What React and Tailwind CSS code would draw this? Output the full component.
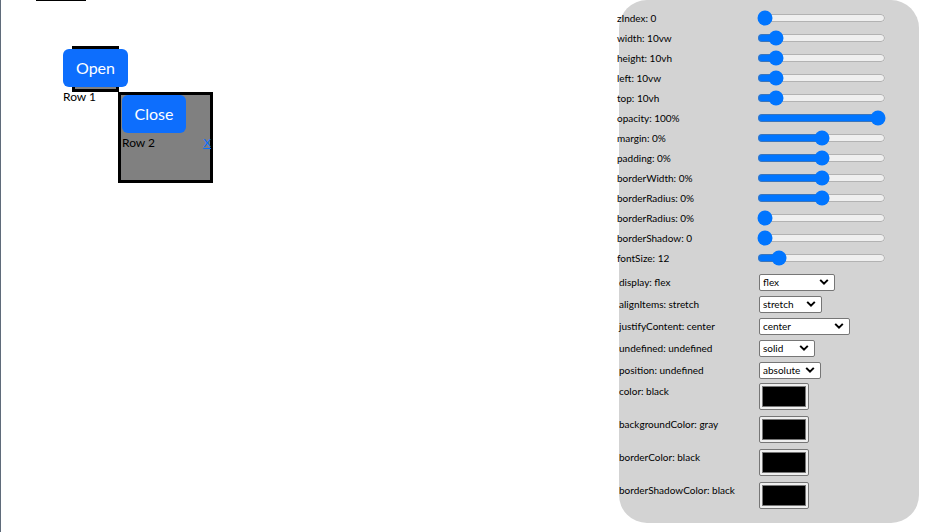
import React from "react";

const sliders = [
  { label: "zIndex: 0", min: 0, max: 100, value: 0 },
  { label: "width: 10vw", min: 0, max: 100, value: 10 },
  { label: "height: 10vh", min: 0, max: 100, value: 10 },
  { label: "left: 10vw", min: 0, max: 100, value: 10 },
  { label: "top: 10vh", min: 0, max: 100, value: 10 },
  { label: "opacity: 100%", min: 0, max: 100, value: 100 },
  { label: "margin: 0%", min: -100, max: 100, value: 0 },
  { label: "padding: 0%", min: -100, max: 100, value: 0 },
  { label: "borderWidth: 0%", min: -100, max: 100, value: 0 },
  { label: "borderRadius: 0%", min: -100, max: 100, value: 0 },
  { label: "borderRadius: 0%", min: 0, max: 100, value: 0 },
  { label: "borderShadow: 0", min: 0, max: 100, value: 0 },
  { label: "fontSize: 12", min: 0, max: 95, value: 12 },
];

const selects = [
  { label: "display: flex", value: "flex", options: ["flex", "block", "inline", "grid"], w: "w-[76px]" },
  { label: "alignItems: stretch", value: "stretch", options: ["stretch", "center", "start", "end"], w: "w-[63px]" },
  { label: "justifyContent: center", value: "center", options: ["center", "start", "end", "space-between"], w: "w-[91px]" },
  { label: "undefined: undefined", value: "solid", options: ["solid", "dashed", "dotted"], w: "w-[56px]" },
  { label: "position: undefined", value: "absolute", options: ["absolute", "relative", "fixed"], w: "w-[62px]" },
];

const colors = [
  "color: black",
  "backgroundColor: gray",
  "borderColor: black",
  "borderShadowColor: black",
];

function Chevron() {
  return (
    <svg
      className="pointer-events-none absolute right-[6px] top-1/2 -translate-y-1/2"
      width="10"
      height="7"
      viewBox="0 0 10 7"
    >
      <path d="M1.2 1.4 L5 5.2 L8.8 1.4" fill="none" stroke="#000" strokeWidth="2" />
    </svg>
  );
}

export default function App() {
  return (
    <div className="relative h-[532px] w-[925px] overflow-hidden border-l border-[#5f6b7a] bg-white font-['Lato','Liberation_Sans',sans-serif]">
      {/* canvas */}
      <div className="absolute left-[35px] top-0 h-px w-[50px] bg-black" />

      {/* Row 1 window */}
      <div className="absolute left-[71px] top-[46px] h-[46px] w-[47px] border-[3px] border-black bg-[#808080]" />
      <div className="absolute left-[62px] top-[49px] flex flex-col items-start">
        <button className="flex h-[38px] w-[65px] items-center justify-center rounded-[6px] bg-[#0d6efd] text-[16px] text-white">
          Open
        </button>
        <span className="mt-[3px] text-[12px] leading-[14px] text-black">Row 1</span>
      </div>

      {/* Row 2 window */}
      <div className="absolute left-[117px] top-[92px] flex h-[91px] w-[95px] flex-col border-[3px] border-black bg-[#808080]">
        <button className="ml-px flex h-[38px] w-[64px] items-center justify-center rounded-[6px] bg-[#0d6efd] text-[16px] text-white">
          Close
        </button>
        <div className="mt-[3px] flex items-center justify-between pl-px text-[12px] leading-[14px] text-black">
          <span>Row 2</span>
          <a href="#" className="mr-[-1px] text-[#0d6efd] underline">
            X
          </a>
        </div>
      </div>

      {/* control panel */}
      <div className="absolute left-[618px] top-0 flex h-[523px] w-[300px] flex-col rounded-[28px] bg-[#d3d3d3] pt-[8px] text-[10px] leading-[14px] text-black">
        <div className="ml-[-2px] flex flex-col">
          {sliders.map((s, i) => (
            <div key={i} className="flex h-[20px] items-center">
              <span className="w-[140px] whitespace-nowrap">{s.label}</span>
              <input
                type="range"
                min={s.min}
                max={s.max}
                defaultValue={s.value}
                className="h-[16px] w-[129px]"
              />
            </div>
          ))}
        </div>

        <div className="mt-[3px] flex flex-col">
          {selects.map((s, i) => (
            <div key={i} className="flex h-[22px] items-center">
              <span className="w-[140px] whitespace-nowrap">{s.label}</span>
              <div className={`relative ${s.w}`}>
                <select
                  defaultValue={s.value}
                  className="h-[17px] w-full appearance-none rounded-[2px] border border-[#767676] bg-white pl-[3px] text-[10px] leading-[14px]"
                >
                  {s.options.map((o) => (
                    <option key={o} value={o}>
                      {o}
                    </option>
                  ))}
                </select>
                <Chevron />
              </div>
            </div>
          ))}
        </div>

        <div className="flex flex-col">
          {colors.map((c, i) => (
            <div key={i} className="flex h-[33px] items-start">
              <span className="w-[140px] whitespace-nowrap pt-[3px]">{c}</span>
              <div className="mt-[2px] h-[27px] w-[50px] rounded-[2px] border border-[#767676] bg-[#efefef] p-[2px]">
                <div className="h-full w-full border border-[#777] bg-black" />
              </div>
            </div>
          ))}
        </div>
      </div>
    </div>
  );
}
